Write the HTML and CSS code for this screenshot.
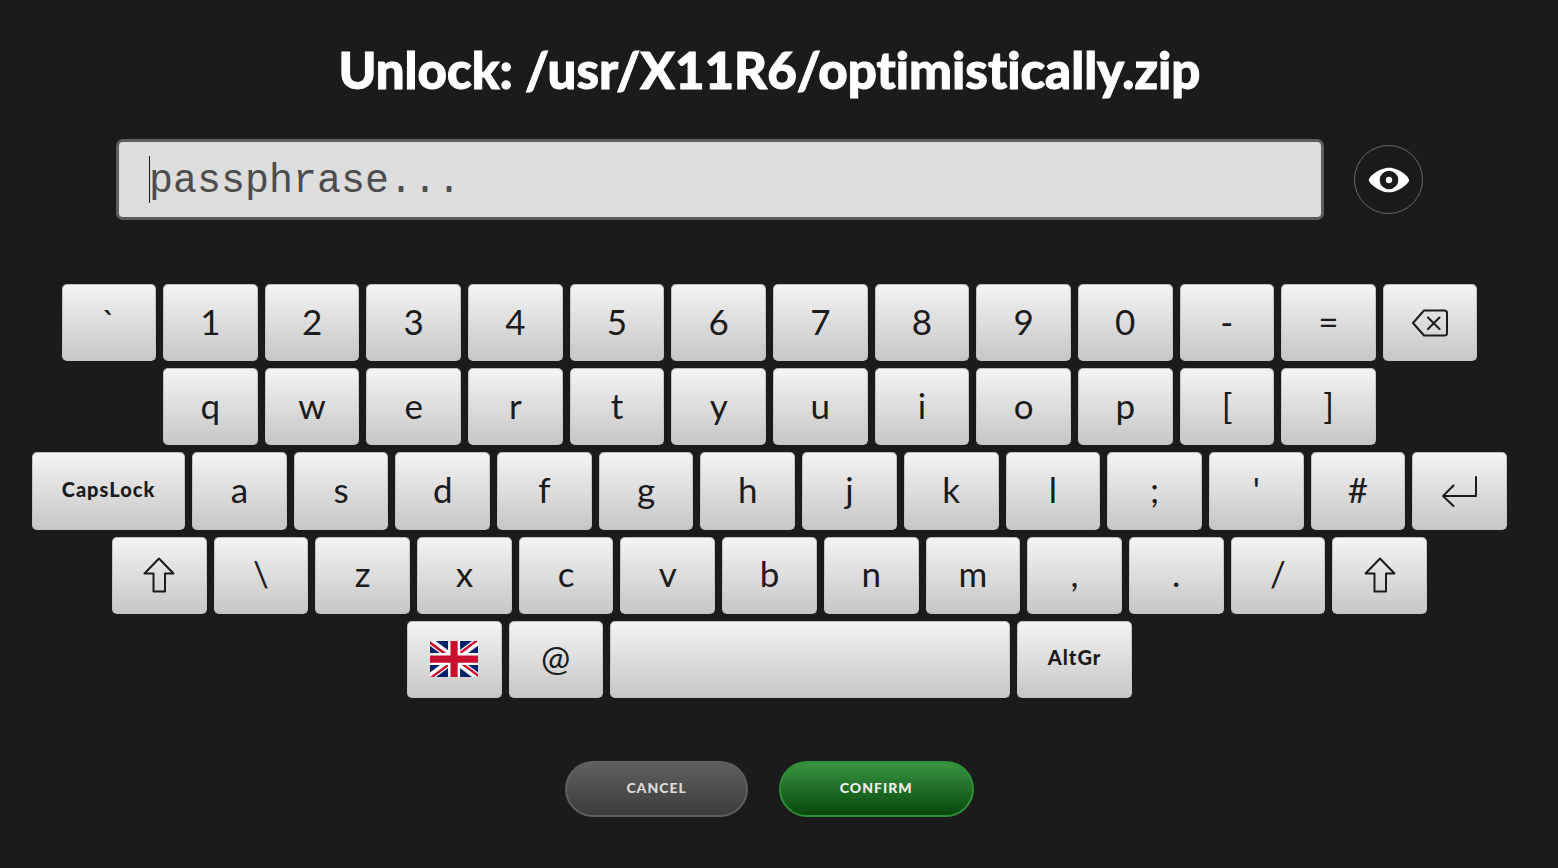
FILE: index.html
```html
<!DOCTYPE html>
<html lang="en">
<head>
<meta charset="utf-8">
<meta name="viewport" content="width=device-width, initial-scale=1">
<title>Unlock</title>
<link rel="stylesheet" href="styles.css">
</head>
<body>
<main class="page">
  <h1 class="title">Unlock: /usr/X11R6/optimistically.zip</h1>
  <form class="form">
    <div class="entry">
      <div class="field">
        <input class="field-input" type="text" aria-label="Passphrase" placeholder="passphrase..." autocomplete="off">
        <span class="caret"></span>
      </div>
      <button class="reveal" type="button" aria-label="Show passphrase">
        <svg width="42" height="26" viewBox="0 0 42 26"><path fill="#fff" fill-rule="evenodd" d="M.8 13C.8 10 11 .7 21 .7S41.200 10 41.200 13 31 25.300 21 25.300 .8 16 .8 13ZM21 3.700a9.300 9.300 0 1 0 0 18.600a9.300 9.300 0 1 0 0-18.600Z"/><circle cx="21" cy="13" r="3.200" fill="#fff"/></svg>
      </button>
    </div>
    <div class="keyboard">
      <div class="row row-numbers">
        <button class="key" type="button">`</button>
        <button class="key" type="button">1</button>
        <button class="key" type="button">2</button>
        <button class="key" type="button">3</button>
        <button class="key" type="button">4</button>
        <button class="key" type="button">5</button>
        <button class="key" type="button">6</button>
        <button class="key" type="button">7</button>
        <button class="key" type="button">8</button>
        <button class="key" type="button">9</button>
        <button class="key" type="button">0</button>
        <button class="key" type="button">-</button>
        <button class="key" type="button">=</button>
        <button class="key key-icon" type="button" aria-label="Backspace">
          <svg class="icon" width="36" height="28" viewBox="0 0 36 28"><path d="M12 1.500H32.500Q35 1.500 35 4V24Q35 26.500 32.500 26.500H12L1 14ZM16 8.500L27.500 20M27.500 8.500L16 20"/></svg>
        </button>
      </div>
      <div class="row row-upper">
        <button class="key" type="button">q</button>
        <button class="key" type="button">w</button>
        <button class="key" type="button">e</button>
        <button class="key" type="button">r</button>
        <button class="key" type="button">t</button>
        <button class="key" type="button">y</button>
        <button class="key" type="button">u</button>
        <button class="key" type="button">i</button>
        <button class="key" type="button">o</button>
        <button class="key" type="button">p</button>
        <button class="key" type="button">[</button>
        <button class="key" type="button">]</button>
      </div>
      <div class="row row-home">
        <button class="key key-caps" type="button">CapsLock</button>
        <button class="key" type="button">a</button>
        <button class="key" type="button">s</button>
        <button class="key" type="button">d</button>
        <button class="key" type="button">f</button>
        <button class="key" type="button">g</button>
        <button class="key" type="button">h</button>
        <button class="key" type="button">j</button>
        <button class="key" type="button">k</button>
        <button class="key" type="button">l</button>
        <button class="key" type="button">;</button>
        <button class="key" type="button">'</button>
        <button class="key" type="button">#</button>
        <button class="key key-icon" type="button" aria-label="Enter">
          <svg class="icon" width="36" height="32" viewBox="0 0 36 32"><path d="M34 2V21H1M11.500 10.500L1 21L11.500 31"/></svg>
        </button>
      </div>
      <div class="row row-lower">
        <button class="key key-icon" type="button" aria-label="Left shift">
          <svg class="icon" width="32" height="36" viewBox="0 0 32 36"><path d="M16 1.500L30.500 16.500H22V34.500H10.500V16.500H1.500Z"/></svg>
        </button>
        <button class="key" type="button">\</button>
        <button class="key" type="button">z</button>
        <button class="key" type="button">x</button>
        <button class="key" type="button">c</button>
        <button class="key" type="button">v</button>
        <button class="key" type="button">b</button>
        <button class="key" type="button">n</button>
        <button class="key" type="button">m</button>
        <button class="key" type="button">,</button>
        <button class="key" type="button">.</button>
        <button class="key" type="button">/</button>
        <button class="key key-icon" type="button" aria-label="Right shift">
          <svg class="icon" width="32" height="36" viewBox="0 0 32 36"><path d="M16 1.500L30.500 16.500H22V34.500H10.500V16.500H1.500Z"/></svg>
        </button>
      </div>
      <div class="row row-space">
        <button class="key key-icon" type="button" aria-label="Keyboard layout: United Kingdom">
          <svg width="48" height="36" viewBox="0 0 640 480"><path fill="#012169" d="M0 0h640v480H0z"/><path fill="#fff" d="m75 0 244 181L562 0h78v62L400 241l240 178v61h-80L320 301 81 480H0v-60l239-178L0 64V0z"/><path fill="#c8102e" d="m424 281 216 159v40L369 281zm-184 20 6 35L54 480H0zM640 0v3L391 191l2-44L590 0zM0 0l239 176h-60L0 42z"/><path fill="#fff" d="M241 0v480h160V0zM0 160v160h640V160z"/><path fill="#c8102e" d="M0 193v96h640v-96zM273 0v480h96V0z"/></svg>
        </button>
        <button class="key" type="button">@</button>
        <button class="key key-space" type="button" aria-label="Space"></button>
        <button class="key key-altgr" type="button">AltGr</button>
      </div>
    </div>
    <div class="actions">
      <button class="action cancel" type="button">CANCEL</button>
      <button class="action confirm" type="submit">CONFIRM</button>
    </div>
  </form>
</main>
</body>
</html>
```
FILE: styles.css
```css
* {
  box-sizing: border-box;
}

body {
  margin: 0;
  min-height: 100vh;
  background: #1b1b1b;
  color: #fff;
  font-family: Lato, "Open Sans", sans-serif;
}

button,
input {
  margin: 0;
  font-family: inherit;
}

button {
  cursor: pointer;
}

svg {
  display: block;
  flex: none;
}

.page {
  padding: 39px 51px 51px 32px;
}

.title {
  margin: 0;
  font-family: "Lato Black", Lato, sans-serif;
  font-size: 51px;
  line-height: 62px;
  font-weight: 900;
  font-variant-ligatures: none;
  text-align: center;
  -webkit-text-stroke: 1px #fff;
}

.entry {
  display: flex;
  align-items: center;
  gap: 30px;
  margin: 38px 84px 0;
}

.field {
  position: relative;
  flex: 1;
}

.field-input {
  display: block;
  width: 100%;
  height: 81px;
  padding: 4px 30px 0;
  border: 3px solid #5f5f5f;
  border-radius: 7px;
  background: #ddd;
  color: #1b1b1b;
  font-family: "Liberation Mono", monospace;
  font-size: 40px;
  outline: none;
}

.field-input::placeholder {
  color: #4d4d4d;
  opacity: 1;
}

.caret {
  position: absolute;
  left: 33px;
  top: 17px;
  width: 1px;
  height: 47px;
  background: #1b1b1b;
}

.reveal {
  display: flex;
  flex: none;
  align-items: center;
  justify-content: center;
  width: 69px;
  height: 69px;
  padding: 0;
  border: 1px solid #6a6a6a;
  border-radius: 50%;
  background: none;
}

.keyboard {
  display: grid;
  grid-auto-rows: 1fr;
  gap: 7px;
  min-height: 414px;
  margin-top: 64px;
}

.row {
  display: flex;
  gap: 7px;
  width: 100%;
  margin: 0 auto;
}

.row-numbers {
  max-width: 1416px;
}

.row-upper {
  max-width: 1213px;
}

.row-lower {
  max-width: 1315px;
}

.row-space {
  max-width: 725px;
}

.key {
  display: flex;
  flex: 1 1 0;
  align-items: center;
  justify-content: center;
  min-width: 0;
  padding: 0 0 4px;
  border: 1px solid #c4c4c4;
  border-top-color: #bcbcbc;
  border-radius: 5px;
  background: linear-gradient(#f4f4f4, #c6c6c6) border-box;
  color: #1b1b1b;
  font-size: 35px;
  line-height: 44px;
}

.key-icon {
  padding: 0;
}

.key-caps,
.key-altgr {
  font-family: "Lato Black", Lato, sans-serif;
  font-size: 20px;
  font-weight: 900;
  letter-spacing: 1px;
}

.key-caps {
  flex: 0 0 153px;
}

.key-altgr {
  flex: 0 0 115px;
}

.key-space {
  flex: 0 0 400px;
}

.icon {
  fill: none;
  stroke: #1b1b1b;
  stroke-width: 2;
  stroke-linecap: round;
  stroke-linejoin: round;
}

.actions {
  display: flex;
  justify-content: center;
  gap: 31px;
  margin-top: 63px;
}

.action {
  height: 56px;
  padding: 0 59px 3px;
  border: 2px solid;
  border-radius: 28px;
  font-family: "Lato Black", Lato, sans-serif;
  font-size: 14px;
  font-weight: 900;
  letter-spacing: 1px;
}

.cancel {
  border-color: #5f5f5f;
  background: linear-gradient(#5f5f5f, #3c3c3c);
  color: #ddd;
}

.confirm {
  border-color: #2f8f38;
  background: linear-gradient(#38943f, #084710);
  color: #f0f0f0;
}
```
